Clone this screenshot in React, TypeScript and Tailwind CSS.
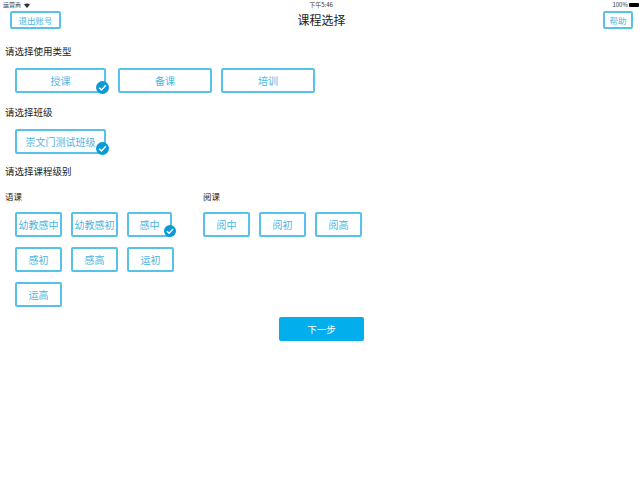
const font = { fontFamily: '"Noto Sans CJK SC", "Liberation Sans", sans-serif' };

function Check({ small }: { small?: boolean }) {
  return (
    <svg
      viewBox="0 0 14 14"
      className={
        small
          ? "absolute -right-[5.5px] -bottom-[2px] h-[12px] w-[12px]"
          : "absolute -right-[5px] -bottom-[3px] h-[13px] w-[13px]"
      }
    >
      <circle cx="7" cy="7" r="7" fill="#0b9ad8" />
      <path d="M3.4 7.2l2.5 2.5 4.7-5" fill="none" stroke="#fff" strokeWidth="1.6" />
    </svg>
  );
}

function Choice({
  label,
  className,
  checked,
  small,
}: {
  label: string;
  className: string;
  checked?: boolean;
  small?: boolean;
}) {
  return (
    <div
      className={`relative flex items-center justify-center rounded-[2px] border-2 border-[#56c2ea] text-[#4ab6e2] ${className}`}
    >
      <span className="text-[10px] leading-none">{label}</span>
      {checked && <Check small={small} />}
    </div>
  );
}

const yuke = [
  { label: "幼教感中" },
  { label: "幼教感初" },
  { label: "感中", checked: true },
  { label: "感初" },
  { label: "感高" },
  { label: "运初" },
  { label: "运高" },
];

const yueke = ["阅中", "阅初", "阅高"];

export default function App() {
  return (
    <div className="h-[482px] w-[643px] overflow-hidden bg-white text-[#222]" style={font}>
      <div className="flex h-[10px] items-center justify-between pl-[3px] pr-[4px] text-[6px] leading-none text-[#333]">
        <div className="flex w-[100px] items-center gap-[3px]">
          <span>运营商</span>
          <svg width="6" height="5" viewBox="0 0 6 5">
            <path d="M3 5L0 1.6Q3-.6 6 1.6z" fill="#333" />
          </svg>
        </div>
        <span>下午5:46</span>
        <div className="flex w-[100px] items-center justify-end gap-[1px]">
          <span>100%</span>
          <div className="h-[4px] w-[10px] rounded-[1px] bg-black" />
        </div>
      </div>

      <header className="mt-px grid grid-cols-[1fr_auto_1fr] items-center px-[10px]">
        <div className="flex h-[18px] w-[51px] items-center justify-center rounded-[2px] border-2 border-[#56c2ea] text-[8.5px] text-[#4ab6e2]">
          退出账号
        </div>
        <h1 className="text-[12px] leading-none">课程选择</h1>
        <div className="flex h-[18px] w-[30px] items-center justify-center justify-self-end rounded-[2px] border-2 border-[#56c2ea] text-[8.5px] text-[#4ab6e2]">
          帮助
        </div>
      </header>

      <main className="pl-[5px]">
        <h2 className="mt-[17px] text-[9.5px] leading-[11px]">请选择使用类型</h2>
        <div className="mt-[11px] flex pl-[10px]">
          <Choice label="授课" checked className="h-[25px] w-[91px]" />
          <Choice label="备课" className="ml-[12px] h-[25px] w-[94px]" />
          <Choice label="培训" className="ml-[9px] h-[25px] w-[94px]" />
        </div>

        <h2 className="mt-[14px] text-[9.5px] leading-[11px]">请选择班级</h2>
        <div className="mt-[11px] pl-[10px]">
          <Choice label="崇文门测试班级" checked className="h-[25px] w-[91px]" />
        </div>

        <h2 className="mt-[12px] text-[9.5px] leading-[11px]">请选择课程级别</h2>

        <div className="mt-[14px] flex">
          <section className="w-[198px]">
            <h3 className="text-[8.5px] leading-[10px]">语课</h3>
            <div className="mt-[11px] grid grid-cols-[56px_56px_56px] gap-y-[10px] pl-[10px]">
              {yuke.map((item) => (
                <Choice
                  key={item.label + (item.checked ? "-on" : "")}
                  label={item.label}
                  checked={item.checked}
                  small
                  className={item.checked ? "h-[25px] w-[45px]" : "h-[25px] w-[47px]"}
                />
              ))}
            </div>
          </section>
          <section>
            <h3 className="text-[8.5px] leading-[10px]">阅课</h3>
            <div className="mt-[11px] grid grid-cols-[56px_56px_56px]">
              {yueke.map((label) => (
                <Choice key={label} label={label} className="h-[25px] w-[47px]" />
              ))}
            </div>
          </section>
        </div>

        <div className="mt-[10px] pl-[274px]">
          <div className="flex h-[24px] w-[85px] items-center justify-center rounded-[2px] bg-[#03aeed] text-[9.5px] text-white">
            下一步
          </div>
        </div>
      </main>
    </div>
  );
}
